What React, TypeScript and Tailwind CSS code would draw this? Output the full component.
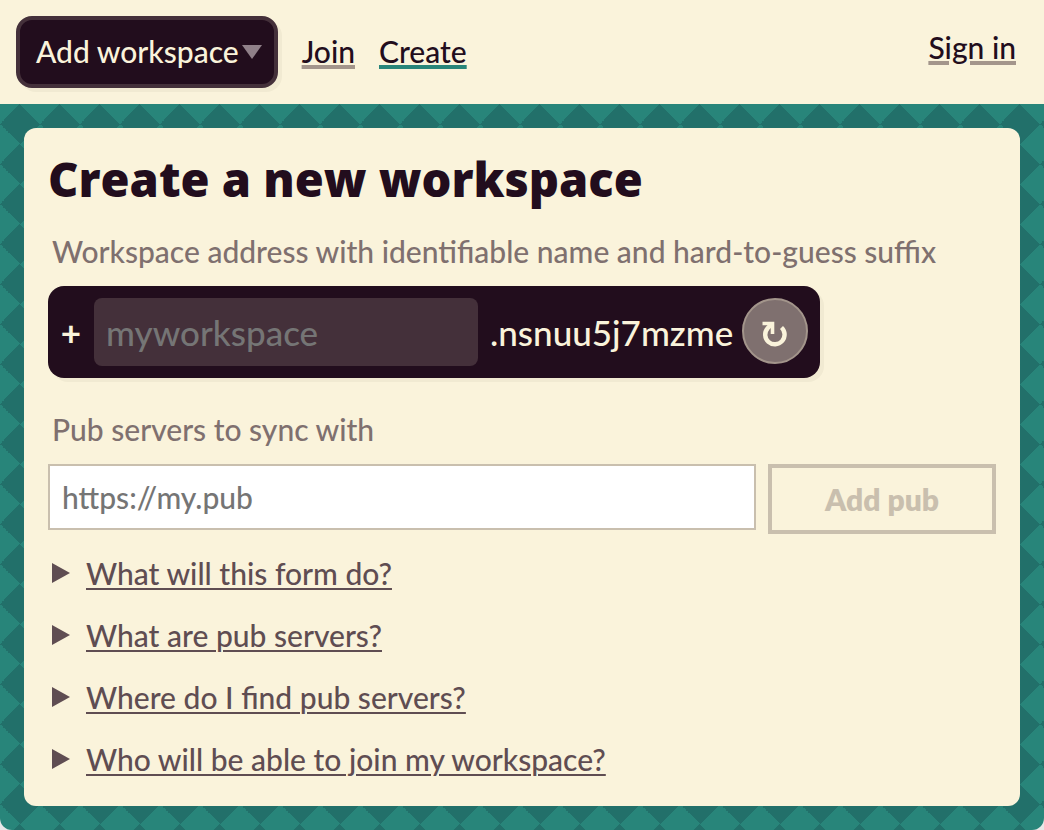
import React from "react";

const questions = [
  "What will this form do?",
  "What are pub servers?",
  "Where do I find pub servers?",
  "Who will be able to join my workspace?",
];

function Header() {
  return (
    <header className="flex items-center bg-[#faf3db] p-4">
      <button
        type="button"
        aria-haspopup="menu"
        className="flex h-[72px] items-center gap-[3px] rounded-2xl border-4 border-[#44303a] bg-[#220d1d] pr-3 pb-0.5 pl-4 text-[30px] leading-10 font-medium text-[#faf3db] shadow-[4px_4px_0_#f1ead2]"
      >
        Add workspace
        <svg aria-hidden="true" width="20" height="16" viewBox="0 0 20 16">
          <path d="M0 2H20L10 16Z" fill="#908089" />
        </svg>
      </button>
      <nav className="ml-6 flex flex-1 items-center gap-6 pb-0.5 text-[30px] leading-10 font-medium">
        <a href="#join" className="underline decoration-[#a3958b] decoration-4 underline-offset-2">
          Join
        </a>
        <a href="#create" className="underline decoration-[#28857a] decoration-4 underline-offset-2">
          Create
        </a>
        <a href="#sign-in" className="mr-3 mb-2 ml-auto underline decoration-[#a3958b] decoration-4 underline-offset-2">
          Sign in
        </a>
      </nav>
    </header>
  );
}

function WorkspaceAddress() {
  return (
    <div className="mt-4 flex h-[92px] w-fit items-start gap-3 rounded-2xl bg-[#220d1d] p-3 text-[35px] leading-[68px] font-medium text-[#faf3db] shadow-[4px_4px_0_#f1ead2]">
      <span className="w-[22px] text-center font-bold">+</span>
      <input
        id="workspace-name"
        type="text"
        placeholder="myworkspace"
        className="h-[68px] w-96 rounded-lg bg-[#44303a] px-3 placeholder:text-[#757575]"
      />
      <span className="w-[240px]">.nsnuu5j7mzme</span>
      <button
        type="button"
        aria-label="Generate a new suffix"
        className="flex size-[66px] items-center justify-center rounded-full border-2 border-[#a3958b] bg-[#7f706f]"
      >
        <svg aria-hidden="true" width="28" height="32" viewBox="0 0 28 32" fill="none" stroke="currentColor" strokeWidth="4.4">
          <path d="M20.5 12.5A9.7 9.7 0 1 1 6.6 13.2L11 8.5" />
          <path d="M1.5 8.5H11.5V19" strokeWidth="3.6" />
        </svg>
      </button>
    </div>
  );
}

export default function App() {
  return (
    <div className="flex min-h-screen flex-col bg-[#e8e8e8] font-['Lato','Gill_Sans',sans-serif] text-[#220d1d]">
      <Header />
      <main className="flex flex-1 flex-col rounded-b-xl bg-[repeating-conic-gradient(from_45deg,#22706a_0_25%,#28857a_0_50%)] bg-[length:40px_40px] bg-[position:20px_0px] p-6">
        <section className="flex-1 rounded-xl bg-[#faf3db] p-6">
          <h1 className="font-['Open_Sans',sans-serif] text-[47px] leading-[54px] font-extrabold">Create a new workspace</h1>
          <form className="mt-[26px]">
            <label htmlFor="workspace-name" className="block pl-1 text-[30px] leading-[38px] font-medium text-[#7f706f]">
              Workspace address with identifiable name and hard-to-guess suffix
            </label>
            <WorkspaceAddress />
            <label htmlFor="pub" className="mt-8 block pl-1 text-[30px] leading-[38px] font-medium text-[#7f706f]">
              Pub servers to sync with
            </label>
            <div className="mt-4 flex items-start gap-3">
              <input
                id="pub"
                type="text"
                placeholder="https://my.pub"
                className="h-[66px] min-w-0 flex-1 border-2 border-[#c9bfae] bg-white px-3 text-[30px] font-medium placeholder:text-[#757575]"
              />
              <button
                type="button"
                disabled
                className="h-[70px] w-[228px] border-4 border-[#c9bfae] text-[30px] font-extrabold text-[#c9bfae]"
              >
                Add pub
              </button>
            </div>
          </form>
          <div className="mt-5 flex flex-col gap-6 pl-1 text-[30px] leading-[38px] font-medium text-[#5f4d52]">
            {questions.map((question) => (
              <details key={question}>
                <summary className="flex items-center gap-4">
                  <svg aria-hidden="true" width="18" height="20" viewBox="0 0 18 20">
                    <path d="M0 0L18 10L0 20Z" fill="currentColor" />
                  </svg>
                  <span className="underline decoration-2 underline-offset-3">{question}</span>
                </summary>
              </details>
            ))}
          </div>
        </section>
      </main>
    </div>
  );
}
